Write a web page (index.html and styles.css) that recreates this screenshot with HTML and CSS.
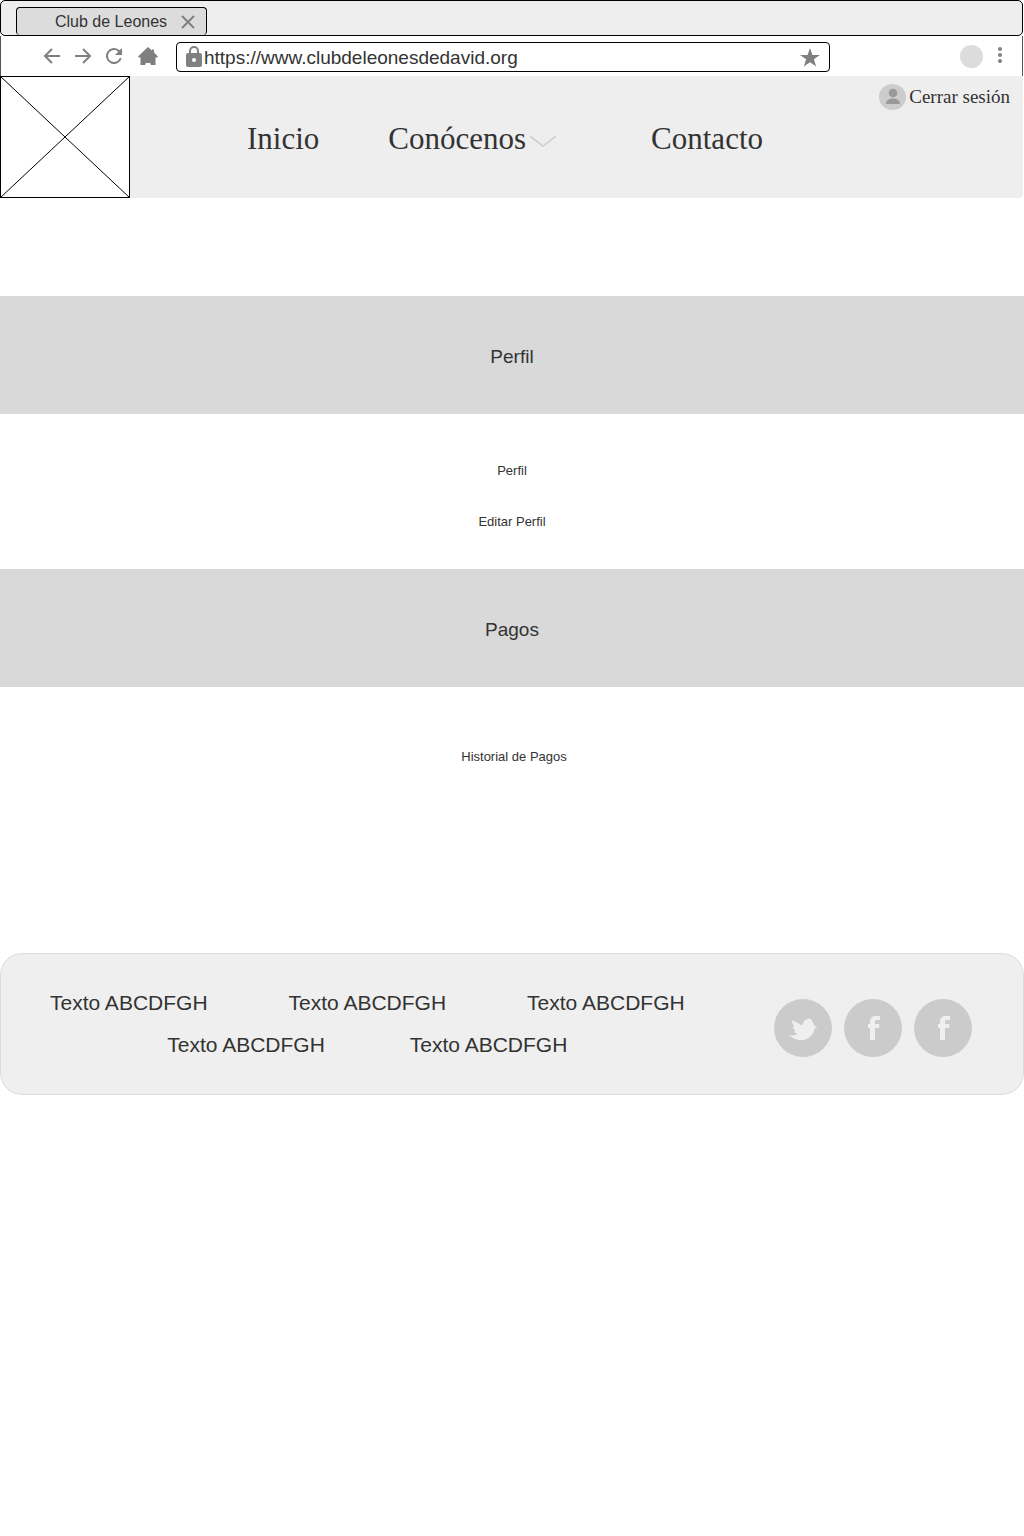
FILE: index.html
```html
<!DOCTYPE html>
<html lang="es">
<head>
<meta charset="utf-8">
<meta name="viewport" content="width=device-width, initial-scale=1">
<title>Club de Leones</title>
<link rel="stylesheet" href="styles.css">
</head>
<body>
<div class="browser">
  <div class="tab-bar">
    <div class="tab">
      <span>Club de Leones</span>
      <button class="icon-button" type="button" aria-label="Cerrar pestaña">
        <svg width="14" height="14" viewBox="0 0 14 14"><path d="M1 1L13 13M13 1L1 13" fill="none" stroke="#808080" stroke-width="2"/></svg>
      </button>
    </div>
  </div>
  <div class="toolbar">
    <div class="tools">
      <button class="icon-button" type="button" aria-label="Atrás">
        <svg width="16" height="16" viewBox="0 0 16 16"><path d="M16 8H1.500M8 1L1 8L8 15" fill="none" stroke="#808080" stroke-width="2"/></svg>
      </button>
      <button class="icon-button" type="button" aria-label="Adelante">
        <svg width="16" height="16" viewBox="0 0 16 16"><path d="M0 8H14.500M8 1L15 8L8 15" fill="none" stroke="#808080" stroke-width="2"/></svg>
      </button>
      <button class="icon-button" type="button" aria-label="Recargar">
        <svg width="16" height="16" viewBox="0 0 16 16"><path d="M13.650 2.350A8 8 0 1 0 15.730 10H13.650A6 6 0 1 1 8 2C9.660 2 11.140 2.690 12.220 3.780L9 7H16V0Z" fill="#808080"/></svg>
      </button>
      <button class="icon-button" type="button" aria-label="Inicio del navegador">
        <svg width="21" height="18" viewBox="0 0 21 18"><path d="M11 0L15 3.500V2.500H17V5.500L21 9.500L20 10.500H18.500V18H14L13.200 16H8.800L8 18H3.500V10.500H2L1 9.500Z" fill="#808080"/></svg>
      </button>
    </div>
    <div class="address">
      <svg width="16" height="21" viewBox="0 0 16 21"><path d="M4 8V5A4 4 0 0 1 12 5V8" fill="none" stroke="#808080" stroke-width="2"/><rect y="7" width="16" height="14" rx="2" fill="#808080"/><circle cx="8" cy="14" r="2" fill="#fff"/></svg>
      <input class="url" type="text" aria-label="Dirección" value="https://www.clubdeleonesdedavid.org">
      <button class="icon-button" type="button" aria-label="Añadir a favoritos">
        <svg width="20" height="19" viewBox="0 0 20 19"><path d="M10 0L12.400 7H20L13.900 11.300L16.200 18.500L10 14.200L3.800 18.500L6.100 11.300L0 7H7.600Z" fill="#808080"/></svg>
      </button>
    </div>
    <div class="account">
      <span class="avatar"></span>
      <button class="icon-button" type="button" aria-label="Menú">
        <svg width="4" height="18" viewBox="0 0 4 18" fill="#808080"><circle cx="2" cy="2" r="2"/><circle cx="2" cy="8" r="2"/><circle cx="2" cy="14" r="2"/></svg>
      </button>
    </div>
  </div>
</div>

<header class="site-header">
  <svg class="logo" width="130" height="122" viewBox="0 0 130 122" role="img" aria-label="Logo"><rect x=".5" y=".5" width="129" height="121" fill="#fff" stroke="#000"/><path d="M0 0L130 122M130 0L0 122" stroke="#000" fill="none"/></svg>
  <nav class="nav">
    <a href="#inicio">Inicio</a>
    <a class="nav-menu" href="#conocenos">Conócenos
      <svg width="26" height="12" viewBox="0 0 26 12"><path d="M0 1L13 11L26 1" fill="none" stroke="#ccc" stroke-width="1.500"/></svg>
    </a>
    <a href="#contacto">Contacto</a>
  </nav>
  <a class="logout" href="#salir">
    <svg width="27" height="26" viewBox="0 0 27 26"><ellipse cx="13.500" cy="13" rx="13.500" ry="13" fill="#ccc"/><circle cx="14" cy="9" r="4.300" fill="#999"/><path d="M7 20C7 16.500 10 14.500 14 14.500S21 16.500 21 20Z" fill="#999"/></svg>
    <span>Cerrar sesión</span>
  </a>
</header>

<main>
  <h2 class="band">Perfil</h2>
  <div class="links profile-links">
    <a href="#perfil">Perfil</a>
    <a href="#editar">Editar Perfil</a>
  </div>
  <h2 class="band">Pagos</h2>
  <div class="links payment-links">
    <a href="#historial">Historial de Pagos</a>
  </div>
</main>

<footer class="site-footer">
  <div class="footer-links">
    <div class="footer-row">
      <a href="#a">Texto ABCDFGH</a>
      <a href="#b">Texto ABCDFGH</a>
      <a href="#c">Texto ABCDFGH</a>
    </div>
    <div class="footer-row footer-row-short">
      <a href="#d">Texto ABCDFGH</a>
      <a href="#e">Texto ABCDFGH</a>
    </div>
  </div>
  <div class="social">
    <a href="#twitter" aria-label="Twitter">
      <svg width="58" height="58" viewBox="0 0 58 58"><circle cx="29" cy="29" r="29" fill="#cbcbcb"/><path d="M14.800 35.500C18 37 21 36.500 24 34.800C21.500 34.300 20.800 33.500 20.300 32.200L21.800 31.500C19.800 30.500 19 29 18.800 27.500L20.500 27.200C18.500 25 17.700 23 18.300 21C20.500 23 24 23.500 28 26.500C29.500 22 32.500 19.500 35.500 19.500L36.800 20.300C38.500 21.500 39.500 24 40 26.800L43.300 28L40.700 29.500C39.500 36 34 41.200 27 41.200C21.500 41 17.500 39 14.800 35.500Z" fill="#efefef"/></svg>
    </a>
    <a href="#facebook" aria-label="Facebook">
      <svg width="58" height="58" viewBox="0 0 58 58"><circle cx="29" cy="29" r="29" fill="#cbcbcb"/><path d="M26 41V29H24V25H26V23C26 19 28 17 32 17H36V21H33C31.500 21 31 21.500 31 23V25H35.500L35 29H31V41Z" fill="#efefef"/></svg>
    </a>
    <a href="#facebook-club" aria-label="Facebook del club">
      <svg width="58" height="58" viewBox="0 0 58 58"><circle cx="29" cy="29" r="29" fill="#cbcbcb"/><path d="M26 41V29H24V25H26V23C26 19 28 17 32 17H36V21H33C31.500 21 31 21.500 31 23V25H35.500L35 29H31V41Z" fill="#efefef"/></svg>
    </a>
  </div>
</footer>
</body>
</html>
```
FILE: styles.css
```css
* { box-sizing: border-box; }

body {
  margin: 0;
  background: #fff;
  color: #333;
  font-family: "Liberation Sans", Arial, sans-serif;
}

a { color: inherit; text-decoration: none; }
svg { display: block; flex: none; }

.icon-button {
  display: block;
  padding: 0;
  border: 0;
  background: none;
}

/* Browser frame */
.browser { margin-right: 1px; }

.tab-bar {
  display: flex;
  align-items: flex-end;
  height: 36px;
  padding-left: 15px;
  border: 1px solid #000;
  border-radius: 5px;
  background: #eee;
}

.tab {
  display: flex;
  align-items: center;
  gap: 14px;
  height: 28px;
  padding: 1px 11px 0 38px;
  border: 1px solid #000;
  border-bottom: 0;
  border-radius: 4px;
  background: #dcdcdc;
  font-size: 16px;
}

.toolbar {
  display: flex;
  align-items: center;
  height: 40px;
  padding: 0 20px 0 43px;
  border: solid #555;
  border-width: 0 1px;
}

.tools {
  display: flex;
  align-items: center;
  gap: 15px;
  margin-right: 18px;
}

.address {
  display: flex;
  align-items: center;
  flex: 1;
  height: 30px;
  margin-top: 2px;
  padding: 0 9px;
  border: 1px solid #000;
  border-radius: 4px;
}

.address > svg { margin-bottom: 2px; }

.url {
  flex: 1;
  min-width: 0;
  height: 28px;
  padding: 2px 0 0 2px;
  border: 0;
  background: none;
  color: #333;
  font: 19px "Liberation Sans", Arial, sans-serif;
}

.account {
  display: flex;
  align-items: center;
  gap: 15px;
  margin-left: 130px;
}

.avatar {
  width: 23px;
  height: 23px;
  border-radius: 50%;
  background: #dcdcdc;
}

/* Site header */
.site-header {
  display: flex;
  justify-content: space-between;
  margin-right: 1px;
  border-radius: 0 0 4px 0;
  background: #eee;
  font-family: "Liberation Serif", "Times New Roman", serif;
}

.nav {
  display: flex;
  flex: 1;
  align-items: center;
  padding: 4px 0 0 117px;
  font-size: 31px;
}

.nav a { margin-right: 69px; }

.nav .nav-menu {
  display: flex;
  align-items: center;
  gap: 4px;
  margin-right: 95px;
}

.nav-menu svg { margin-top: 4px; }

.logout {
  display: flex;
  align-items: center;
  align-self: flex-start;
  gap: 3px;
  padding: 8px 13px 0 0;
  font-size: 19px;
  line-height: 24px;
  white-space: nowrap;
}

/* Sections */
main { padding: 98px 0 188px; }

.band {
  margin: 0;
  padding: 50px 0 46px;
  background: #d9d9d9;
  font-size: 19px;
  font-weight: 400;
  line-height: 22px;
  text-align: center;
}

.links {
  display: flex;
  flex-direction: column;
  align-items: center;
  font-size: 13px;
  line-height: 16px;
}

.profile-links { gap: 35px; padding: 49px 0 39px; }
.payment-links { padding: 62px 0 0 4px; }

/* Footer */
.site-footer {
  display: flex;
  align-items: center;
  justify-content: space-between;
  height: 142px;
  padding: 0 51px 0 49px;
  border: 1px solid #dcdcdc;
  border-radius: 22px;
  background: #efefef;
}

.footer-links {
  display: grid;
  gap: 18px;
  font-size: 21px;
  line-height: 24px;
}

.footer-row {
  display: flex;
  justify-content: center;
  gap: 81px;
}

.footer-row-short { gap: 85px; }

.social {
  display: flex;
  gap: 12px;
  margin-top: 8px;
}
```
